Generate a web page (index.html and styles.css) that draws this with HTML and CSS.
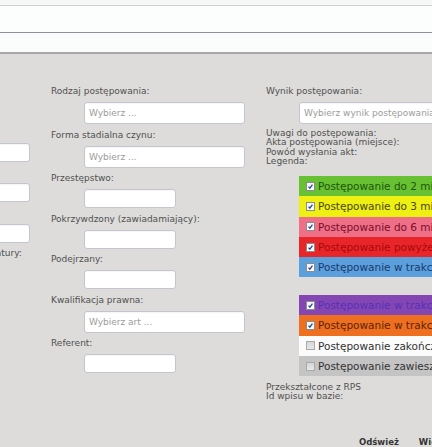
FILE: index.html
```html
<!DOCTYPE html>
<html lang="pl">
<head>
<meta charset="utf-8">
<title>Postępowanie</title>
<link rel="stylesheet" href="styles.css">
</head>
<body>
<header class="top">
  <div class="t1"></div>
  <div class="t2"></div>
  <div class="t3"></div>
</header>
<main class="main">
  <section class="col col1">
    <div class="field"><span class="lbl">Numer sprawy:</span><div class="inp narrow"></div></div>
    <div class="field"><span class="lbl">Sygnatura:</span><div class="inp wide short"></div></div>
    <div class="field"><span class="lbl">Data wszczęcia:</span><div class="inp wide short"></div></div>
    <div class="field"><span class="lbl">Data zakończenia:</span><div class="inp wide short"></div></div>
    <div class="field"><span class="lbl">Data przekazania sprawy do prokuratury:</span><div class="inp narrow"></div></div>
  </section>

  <section class="col col2">
    <div class="field"><span class="lbl">Rodzaj postępowania:</span><div class="inp wide sel"><span class="ph">Wybierz ...</span></div></div>
    <div class="field"><span class="lbl">Forma stadialna czynu:</span><div class="inp wide sel"><span class="ph">Wybierz ...</span></div></div>
    <div class="field"><span class="lbl">Przestępstwo:</span><div class="inp narrow"></div></div>
    <div class="field"><span class="lbl">Pokrzywdzony (zawiadamiający):</span><div class="inp narrow"></div></div>
    <div class="field"><span class="lbl">Podejrzany:</span><div class="inp narrow"></div></div>
    <div class="field"><span class="lbl">Kwalifikacja prawna:</span><div class="inp wide sel"><span class="ph">Wybierz art ...</span></div></div>
    <div class="field"><span class="lbl">Referent:</span><div class="inp narrow"></div></div>
  </section>

  <section class="col col3">
    <div class="field"><span class="lbl">Wynik postępowania:</span><div class="inp wide sel"><span class="ph">Wybierz wynik postępowania</span></div></div>
    <div class="info">
      <div>Uwagi do postępowania:</div>
      <div>Akta postępowania (miejsce):</div>
      <div>Powód wysłania akt:</div>
      <div>Legenda:</div>
    </div>
    <div class="legend">
      <div class="row green"><span class="cb on"><svg viewBox="0 0 9 9"><path d="M2 4.6 L3.7 6.6 L7 2.2"/></svg></span>Postępowanie do 2 miesięcy</div>
      <div class="row yellow"><span class="cb on"><svg viewBox="0 0 9 9"><path d="M2 4.6 L3.7 6.6 L7 2.2"/></svg></span>Postępowanie do 3 miesięcy</div>
      <div class="row pink"><span class="cb on"><svg viewBox="0 0 9 9"><path d="M2 4.6 L3.7 6.6 L7 2.2"/></svg></span>Postępowanie do 6 miesięcy</div>
      <div class="row red"><span class="cb on"><svg viewBox="0 0 9 9"><path d="M2 4.6 L3.7 6.6 L7 2.2"/></svg></span>Postępowanie powyżej 6 miesięcy</div>
      <div class="row blue"><span class="cb on"><svg viewBox="0 0 9 9"><path d="M2 4.6 L3.7 6.6 L7 2.2"/></svg></span>Postępowanie w trakcie</div>
    </div>
    <div class="legend second">
      <div class="row purple"><span class="cb on"><svg viewBox="0 0 9 9"><path d="M2 4.6 L3.7 6.6 L7 2.2"/></svg></span>Postępowanie w trakcie</div>
      <div class="row orange"><span class="cb on"><svg viewBox="0 0 9 9"><path d="M2 4.6 L3.7 6.6 L7 2.2"/></svg></span>Postępowanie w trakcie</div>
      <div class="row white"><span class="cb"></span>Postępowanie zakończone</div>
      <div class="row gray"><span class="cb"></span>Postępowanie zawieszone</div>
    </div>
    <div class="info info2">
      <div>Przekształcone z RPS</div>
      <div>Id wpisu w bazie:</div>
    </div>
    <nav class="actions">
      <span class="act">Odśwież</span>
      <span class="act">Więcej</span>
    </nav>
  </section>
</main>
</body>
</html>
```

FILE: styles.css
```css
html, body {
  margin: 0;
  padding: 0;
}
body {
  background: #dddcda;
  overflow: hidden;
  font-family: "DejaVu Sans", Verdana, sans-serif;
  font-size: 9px;
  color: #505050;
  height: 447px;
}
.top .t1 {
  height: 5px;
  background: #f6f8f8;
  border-bottom: 1px solid #cdd0d0;
}
.top .t2 {
  height: 26px;
  background: #fcfdfd;
  border-bottom: 1px solid #8e9297;
}
.top .t3 {
  height: 19px;
  background: #fbfdfd;
  border-bottom: 2px solid #a7a7a7;
}
.main {
  display: flex;
  margin-left: -164px;
  padding-top: 32px;
}
.col {
  width: 215px;
  flex: 0 0 215px;
  display: flex;
  flex-direction: column;
  gap: 5.5px;
}
.col3 {
  gap: 0;
}
.field {
  display: flex;
  flex-direction: column;
  align-items: flex-start;
}
.lbl {
  line-height: 11px;
  white-space: nowrap;
  color: #505050;
}
.inp {
  margin-top: 5px;
  margin-left: 33px;
  box-sizing: border-box;
  background: #fff;
  border: 1px solid #c3c6d0;
  border-radius: 3px;
  box-shadow: inset 0 1px 1px rgba(0,0,0,0.04);
  display: flex;
  align-items: center;
  overflow: hidden;
}
.inp.narrow {
  width: 92px;
  height: 19px;
}
.inp.wide {
  width: 161px;
  height: 22px;
}
.inp.wide.short {
  height: 19px;
}
.ph {
  padding-left: 4px;
  color: #9c9c9c;
  font-size: 9px;
  white-space: nowrap;
}
.info {
  margin-top: 4.5px;
  line-height: 9.5px;
  color: #505050;
  white-space: nowrap;
}
.legend {
  margin-top: 9.5px;
  margin-left: 33px;
  width: 230px;
  font-size: 10.5px;
}
.legend.second {
  margin-top: 17.5px;
}
.row {
  height: 20.3px;
  display: flex;
  align-items: center;
  padding-left: 7px;
  white-space: nowrap;
  overflow: hidden;
}
.cb {
  width: 9px;
  height: 9px;
  box-sizing: border-box;
  border: 1px solid #8c8c8c;
  background: linear-gradient(#f4f4f4, #ffffff);
  margin-right: 3px;
  flex: 0 0 9px;
  display: flex;
}
.cb svg {
  width: 7px;
  height: 7px;
}
.cb svg path {
  fill: none;
  stroke: #24449a;
  stroke-width: 1.6;
}
.cb:not(.on) {
  background: linear-gradient(#d6d6d6, #e8e8e8);
  border-color: #a8a8a8;
}
.green { background: #68c132; color: #1d560e; }
.yellow { background: #eef014; color: #4a4600; }
.pink { background: #ef6f86; color: #7a0e2c; }
.red { background: #e82629; color: #a8080e; }
.blue { background: #5b9fdc; color: #1a3a6c; }
.purple { background: #8446b2; color: #5432b8; }
.orange { background: #ee6f1f; color: #5a2408; }
.white { background: #fbfbfb; color: #333; }
.gray { background: #c4c4c4; color: #333; }
.info2 {
  margin-top: 6.5px;
}
.actions {
  margin-top: 35.5px;
  margin-left: 93px;
  display: flex;
  gap: 20px;
  line-height: 11px;
}
.act {
  font-weight: bold;
  font-size: 8.5px;
  color: #333;
  white-space: nowrap;
}
```
